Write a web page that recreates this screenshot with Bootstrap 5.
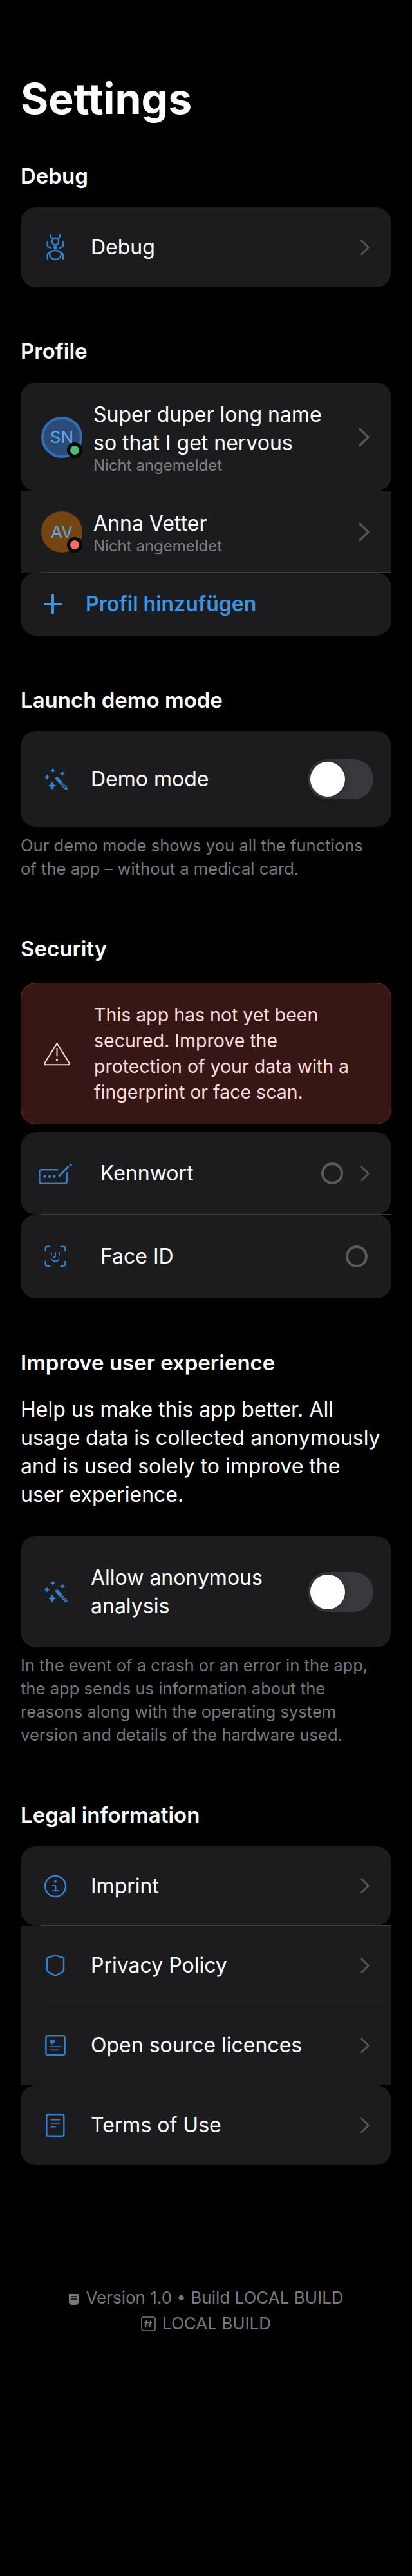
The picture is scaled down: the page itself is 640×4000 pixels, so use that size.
<!DOCTYPE html>
<html lang="en">
<head>
  <meta charset="UTF-8">
  <title>Settings</title>
  <link href="https://cdn.jsdelivr.net/npm/bootstrap@5.3.0/dist/css/bootstrap.min.css" rel="stylesheet">
  <style>
    body { background: #000; color: #fff; font-family: Inter, "Liberation Sans", sans-serif; }
    .page { padding: 113px 32px 0; }
    .page-title { font-size: 66px; line-height: 80px; font-weight: 700; margin: 0 0 60px; }
    .sec-title { font-size: 33px; line-height: 40px; font-weight: 600; margin: 0; }
    .set-row { position: relative; background: #1c1c1e; min-height: 128px; padding: 0 34px 0 32px; font-size: 32px; line-height: 44px; }
    .round { border-radius: 24px; }
    .sep::after { content: ""; position: absolute; left: 32px; right: 0; bottom: 0; height: 1px; background: #3a3a3c; }
    .slot { width: 44px; flex: none; margin-right: 33px; }
    .slot-wide { margin-right: 48px; }
    .slot svg { flex: none; }
    .ico { fill: none; stroke: #2f80d0; stroke-width: 7.5; stroke-linecap: round; stroke-linejoin: round; }
    .ico-fill { fill: #2f80d0; stroke: none; }
    .chev { flex: none; margin-left: auto; fill: none; stroke: #555558; stroke-width: 3.2; stroke-linecap: round; stroke-linejoin: round; }
    .avatar { position: relative; width: 64px; height: 64px; flex: none; margin-right: 17px; border-radius: 50%; font-size: 26px; color: #5aa9e6; }
    .av-blue { background: #2b4a75; border: 4px solid #2f6fb3; }
    .av-brown { background: #744511; }
    .dot { position: absolute; right: 0; bottom: 0; width: 24px; height: 24px; border-radius: 50%; border: 5px solid #000; }
    .av-blue .dot { right: -4px; bottom: -4px; }
    .sub { font-size: 24px; line-height: 26px; color: #7c7c80; }
    .add-label { color: #3d94e0; font-weight: 600; }
    .tgl { width: 102px; height: 62px; flex: none; margin-left: auto; margin-right: -6px; padding: 4px; border-radius: 31px; background: #39393d; }
    .tgl-knob { width: 54px; height: 54px; border-radius: 50%; background: #fff; box-shadow: 0 0 12px rgba(0,0,0,.3); }
    .hint { font-size: 25.6px; line-height: 36px; color: #76767b; margin: 0; }
    .warn { background: #371616; border: 1px solid #8a2a2a; border-radius: 24px; height: 220px; padding: 0 32px 0 35px; color: #fbdcdc; font-size: 28.5px; line-height: 40px; }
    .warn-ico { flex: none; width: 41px; margin-right: 37px; }
    .radio-ring { width: 34px; height: 34px; flex: none; border-radius: 50%; border: 4px solid #5a5a5e; }
    .intro { font-size: 32px; line-height: 44px; margin: 0; }
    .foot { margin-top: 186px; font-size: 26px; line-height: 40px; color: #77777c; }
    .foot svg { margin-right: 10px; vertical-align: -3px; }
  </style>
</head>
<body>
  <svg width="0" height="0" class="d-block">
    <defs>
      <path id="chev-p" d="M2 2 L14 14 L2 26"/>
      <g id="wand">
        <path class="ico-fill" d="M123 99 Q125 110 136 112 Q125 114 123 125 Q121 114 110 112 Q121 110 123 99Z"/>
        <path class="ico-fill" d="M96 128 Q98 141 111 143 Q98 145 96 158 Q94 145 81 143 Q94 141 96 128Z"/>
        <path class="ico-fill" d="M167 112 Q169 125 182 127 Q169 129 167 142 Q165 129 152 127 Q165 125 167 112Z"/>
        <path class="ico-fill" d="M120 162 Q123 180 141 183 Q123 186 120 204 Q117 186 99 183 Q117 180 120 162Z"/>
        <path class="ico-fill" d="M133 150 Q136 140 146 143 L166 165 L154 176 Z"/>
        <path class="ico" style="stroke-width:5" d="M162 168 L188 193 Q190 201 182 199 L157 174"/>
      </g>
    </defs>
  </svg>

  <div class="page">
    <h1 class="page-title">Settings</h1>

    <h2 class="sec-title" style="margin-bottom:29px">Debug</h2>
    <div class="set-row round d-flex align-items-center" style="min-height:124px">
      <div class="slot d-flex justify-content-center">
        <svg width="30" height="42" viewBox="92 70 90 126"><path class="ico" style="stroke-width:7" d="M115 75 Q113 86 124 92 M158 75 Q160 86 149 92 M100 106 V128 L116 136 M173 106 V128 L157 136 M100 187 V166 L112 154 M173 187 V166 L161 154 M137 90 A16 16 0 1 1 136.9 90 M137 147 Q112 150 110 165 Q112 188 137 190 Q162 188 164 165 Q162 150 137 147Z"/><circle class="ico-fill" cx="137" cy="133" r="9"/></svg>
      </div>
      <span>Debug</span>
      <svg class="chev" width="14" height="24.5" viewBox="0 0 16 28"><use href="#chev-p"/></svg>
    </div>

    <h2 class="sec-title" style="margin:79px 0 29px">Profile</h2>
    <div>
      <div class="set-row round sep d-flex align-items-center" style="min-height:169px">
        <div class="avatar av-blue d-flex align-items-center justify-content-center">SN<span class="dot" style="background:#4dbb78"></span></div>
        <div>
          <div>Super duper long name<br>so that I get nervous</div>
          <div class="sub">Nicht angemeldet</div>
        </div>
        <svg class="chev" width="17" height="30" viewBox="0 0 16 28"><use href="#chev-p"/></svg>
      </div>
      <div class="set-row sep d-flex align-items-center" style="min-height:126px">
        <div class="avatar av-brown d-flex align-items-center justify-content-center">AV<span class="dot" style="background:#f76a6a"></span></div>
        <div>
          <div>Anna Vetter</div>
          <div class="sub">Nicht angemeldet</div>
        </div>
        <svg class="chev" width="17" height="30" viewBox="0 0 16 28"><use href="#chev-p"/></svg>
      </div>
      <div class="set-row round d-flex align-items-center" style="min-height:98px">
        <svg class="flex-none" width="28" height="32" viewBox="0 0 28 32" style="margin:0 37px 0 4px"><path d="M14 2 V30 M0 16 H28" stroke="#3d94e0" stroke-width="4" stroke-linecap="round"/></svg>
        <span class="add-label">Profil hinzufügen</span>
      </div>
    </div>

    <h2 class="sec-title" style="margin:80px 0 28px">Launch demo mode</h2>
    <div class="set-row round d-flex align-items-center" style="min-height:149px">
      <div class="slot d-flex justify-content-center"><svg width="39" height="37" viewBox="78 97 116 110"><use href="#wand"/></svg></div>
      <span>Demo mode</span>
      <div class="tgl"><div class="tgl-knob"></div></div>
    </div>
    <p class="hint" style="margin-top:11px">Our demo mode shows you all the functions<br>of the app – without a medical card.</p>

    <h2 class="sec-title" style="margin:86px 0 33px">Security</h2>
    <div class="warn d-flex align-items-center">
      <svg class="warn-ico" width="41" height="37" viewBox="84 54 122 112"><path d="M145 60 L202 152 Q206 161 196 161 H94 Q84 161 88 152 Z" fill="none" stroke="#fbdcdc" stroke-width="6" stroke-linejoin="round"/><path d="M145 85 V120" stroke="#fbdcdc" stroke-width="6" stroke-linecap="round"/><circle cx="145" cy="138" r="5" fill="#fbdcdc"/></svg>
      <div>This app has not yet been<br>secured. Improve the<br>protection of your data with a<br>fingerprint or face scan.</div>
    </div>
    <div style="margin-top:12px">
      <div class="set-row round sep d-flex align-items-center">
        <div class="slot slot-wide d-flex justify-content-center">
          <svg width="54" height="35" viewBox="58 617 162 104"><path class="ico" d="M150 650 H75 Q65 650 65 660 V703 Q65 715 75 715 H183 Q193 715 193 703 V665"/><circle class="ico-fill" cx="90" cy="682" r="6.5"/><circle class="ico-fill" cx="112" cy="682" r="6.5"/><circle class="ico-fill" cx="134" cy="682" r="6.5"/><path class="ico" style="stroke-width:9" d="M157 679 L199 636"/><circle class="ico-fill" cx="210" cy="628" r="6"/></svg>
        </div>
        <span>Kennwort</span>
        <span class="radio-ring ms-auto" style="margin-right:27px"></span>
        <svg class="chev" style="margin-left:0" width="14" height="24.5" viewBox="0 0 16 28"><use href="#chev-p"/></svg>
      </div>
      <div class="set-row round d-flex align-items-center" style="min-height:130px">
        <div class="slot slot-wide d-flex justify-content-center">
          <svg width="34" height="34" viewBox="85 1006 104 103"><path class="ico" d="M90 1030 V1020 Q90 1011 100 1011 H110 M164 1011 H174 Q184 1011 184 1020 V1030 M90 1082 V1092 Q90 1103 100 1103 H110 M164 1103 H174 Q184 1103 184 1092 V1082"/><path class="ico" style="stroke-width:6" d="M118 1040 V1050 M155 1040 V1050 M137 1038 V1056 Q137 1061 130 1061 M120 1073 Q137 1088 154 1073"/></svg>
        </div>
        <span>Face ID</span>
        <span class="radio-ring ms-auto" style="margin-right:3px"></span>
      </div>
    </div>

    <h2 class="sec-title" style="margin:80px 0 31px">Improve user experience</h2>
    <p class="intro">Help us make this app better. All<br>usage data is collected anonymously<br>and is used solely to improve the<br>user experience.</p>
    <div class="set-row round d-flex align-items-center" style="min-height:173px;margin-top:42px">
      <div class="slot d-flex justify-content-center"><svg width="39" height="37" viewBox="78 97 116 110"><use href="#wand"/></svg></div>
      <span>Allow anonymous<br>analysis</span>
      <div class="tgl"><div class="tgl-knob"></div></div>
    </div>
    <p class="hint" style="margin-top:10px">In the event of a crash or an error in the app,<br>the app sends us information about the<br>reasons along with the operating system<br>version and details of the hardware used.</p>

    <h2 class="sec-title" style="margin:86px 0 29px">Legal information</h2>
    <div>
      <div class="set-row round sep d-flex align-items-center" style="min-height:123px">
        <div class="slot d-flex justify-content-center"><svg width="36" height="36" viewBox="85 94 108 108"><circle class="ico" cx="139" cy="148" r="48"/><circle class="ico-fill" cx="139" cy="126" r="6"/><path class="ico" style="stroke-width:6" d="M127 145 H140 V170 M127 170 H153"/></svg></div>
        <span>Imprint</span>
        <svg class="chev" width="14" height="24.5" viewBox="0 0 16 28"><use href="#chev-p"/></svg>
      </div>
      <div class="set-row sep d-flex align-items-center" style="min-height:124px">
        <div class="slot d-flex justify-content-center"><svg width="30" height="36" viewBox="94 465 90 108"><path class="ico" d="M139 471 L178 485 V535 Q178 545 170 550 L139 566 L108 550 Q100 545 100 535 V485 Z"/></svg></div>
        <span>Privacy Policy</span>
        <svg class="chev" width="14" height="24.5" viewBox="0 0 16 28"><use href="#chev-p"/></svg>
      </div>
      <div class="set-row sep d-flex align-items-center" style="min-height:124px">
        <div class="slot d-flex justify-content-center"><svg width="32" height="32" viewBox="89 844 96 96"><rect class="ico" x="93" y="848" width="88" height="88" rx="8"/><path class="ico-fill" d="M123 888 L112 876 Q110 867 117 866 Q122 866 123 870 Q124 866 129 866 Q136 867 134 876 Z"/><path class="ico" style="stroke-width:5" d="M111 898 H163 M111 914 H150"/></svg></div>
        <span>Open source licences</span>
        <svg class="chev" width="14" height="24.5" viewBox="0 0 16 28"><use href="#chev-p"/></svg>
      </div>
      <div class="set-row round d-flex align-items-center" style="min-height:124px">
        <div class="slot d-flex justify-content-center"><svg width="30" height="36" viewBox="95 1211 90 108"><rect class="ico" x="99" y="1215" width="81" height="100" rx="8"/><path class="ico" style="stroke-width:5" d="M120 1240 H160 M120 1256 H160 M120 1273 H140"/></svg></div>
        <span>Terms of Use</span>
        <svg class="chev" width="14" height="24.5" viewBox="0 0 16 28"><use href="#chev-p"/></svg>
      </div>
    </div>

    <div class="foot text-center">
      <div><svg width="17" height="20" viewBox="0 0 17 20"><path d="M1 2 H16 V14 Q16 19 11 19 H6 Q1 19 1 14 Z" fill="#77777c"/><path d="M4 6 H13 M4 10 H13" stroke="#000" stroke-width="1.5"/></svg>Version 1.0 • Build LOCAL BUILD</div>
      <div><svg width="23" height="23" viewBox="0 0 23 23"><rect x="1" y="1" width="21" height="21" rx="3" fill="none" stroke="#77777c" stroke-width="1.6"/><path d="M8.5 6 L7 17 M15 6 L13.5 17 M5.5 9.5 H17 M5 13.5 H16.5" stroke="#77777c" stroke-width="1.6"/></svg>LOCAL BUILD</div>
    </div>
  </div>
</body>
</html>
